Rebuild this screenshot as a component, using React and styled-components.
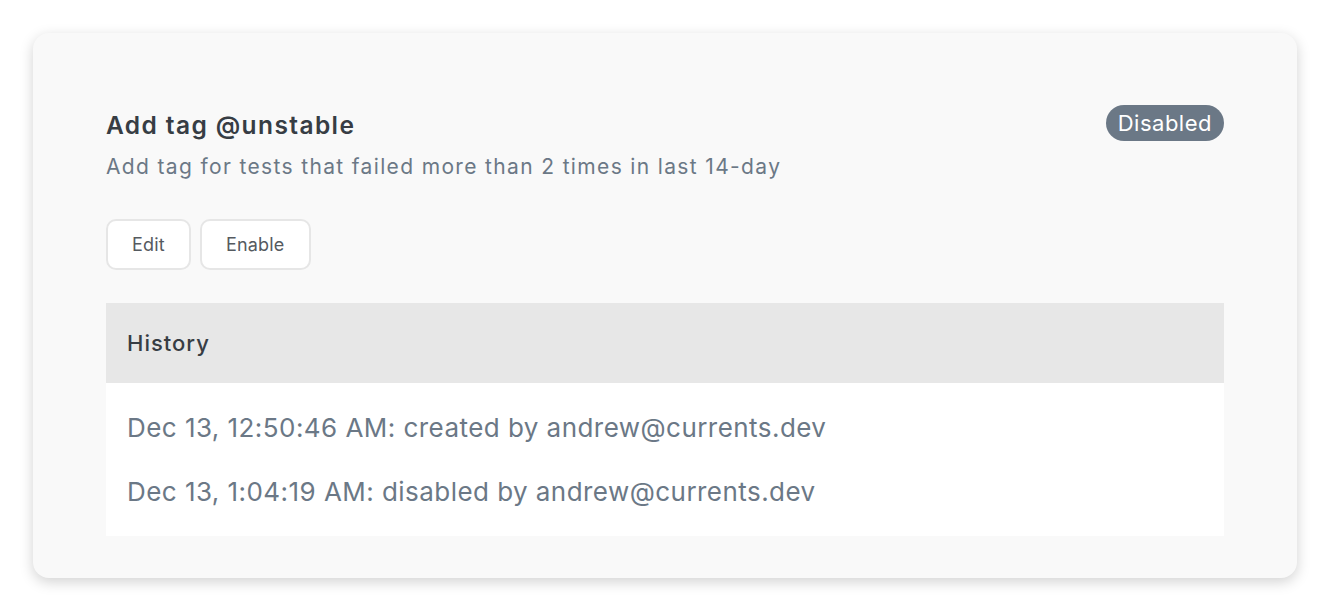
import React from "react";
import styled, { createGlobalStyle } from "styled-components";

const Global = createGlobalStyle`
  html, body { margin: 0; padding: 0; background: #ffffff; }
  body {
    font-family: Inter, "Noto Sans", sans-serif;
    -webkit-font-smoothing: antialiased;
  }
  * { box-sizing: border-box; }
`;

const Page = styled.div`
  width: 1330px;
  height: 612px;
  padding: 33px 33px 0 33px;
`;

const Card = styled.div`
  width: 1264px;
  height: 545px;
  background: #f9f9f9;
  border-radius: 16px;
  box-shadow: 0 4px 14px rgba(0, 0, 0, 0.18);
  padding: 72px 73px 43px 73px;
  display: flex;
  flex-direction: column;
`;

const Header = styled.div`
  display: flex;
  justify-content: space-between;
  align-items: flex-start;
`;

const Title = styled.h2`
  margin: 5px 0 0 0;
  font-size: 24.5px;
  line-height: 30px;
  font-weight: 600;
  letter-spacing: 1.4px;
  color: #373d44;
`;

const Badge = styled.span`
  display: inline-flex;
  align-items: center;
  height: 36px;
  padding: 0 12px;
  border-radius: 18px;
  background: #6b7886;
  color: #ffffff;
  font-size: 22px;
  letter-spacing: 0.5px;
`;

const Subtitle = styled.p`
  margin: 12px 0 0 0;
  font-size: 21px;
  line-height: 28px;
  letter-spacing: 1.35px;
  color: #6b7886;
`;

const Actions = styled.div`
  display: flex;
  gap: 9px;
  margin-top: 38px;
`;

const Button = styled.button`
  height: 51px;
  padding: 0 24px;
  background: #ffffff;
  border: 2px solid #e6e6e6;
  border-radius: 10px;
  font-family: inherit;
  font-size: 18px;
  letter-spacing: 0.2px;
  color: #555a5f;
`;

const History = styled.section`
  margin-top: 33px;
  display: flex;
  flex-direction: column;
`;

const HistoryHead = styled.div`
  height: 80px;
  background: #e7e7e7;
  display: flex;
  align-items: center;
  padding: 0 21px;
  font-size: 22px;
  font-weight: 500;
  letter-spacing: 1px;
  color: #373d44;
`;

const HistoryBody = styled.div`
  background: #ffffff;
  padding: 28px 21px 27px 21px;
  display: flex;
  flex-direction: column;
  gap: 30px;
`;

const Entry = styled.div`
  font-size: 26px;
  line-height: 34px;
  letter-spacing: 0.45px;
  color: #6b7886;
`;

export default function App() {
  return (
    <>
      <Global />
      <Page>
        <Card>
          <Header>
            <Title>Add tag @unstable</Title>
            <Badge>Disabled</Badge>
          </Header>
          <Subtitle>Add tag for tests that failed more than 2 times in last 14-day</Subtitle>
          <Actions>
            <Button>Edit</Button>
            <Button>Enable</Button>
          </Actions>
          <History>
            <HistoryHead>History</HistoryHead>
            <HistoryBody>
              <Entry>Dec 13, 12:50:46 AM: created by andrew@currents.dev</Entry>
              <Entry>Dec 13, 1:04:19 AM: disabled by andrew@currents.dev</Entry>
            </HistoryBody>
          </History>
        </Card>
      </Page>
    </>
  );
}
